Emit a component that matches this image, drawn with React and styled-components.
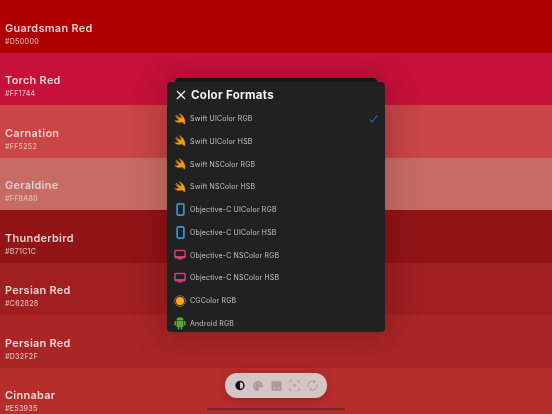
import React from 'react';
import styled, { createGlobalStyle } from 'styled-components';
import { FaPalette } from 'react-icons/fa';

const GlobalStyle = createGlobalStyle`
  html, body {
    margin: 0;
    padding: 0;
    background: #b72e2c;
    font-family: Inter, "Open Sans", "Liberation Sans", sans-serif;
  }
`;

const Page = styled.div`
  position: relative;
  width: 552px;
  height: 414px;
  overflow: hidden;
  filter: blur(0.3px);
`;

const SwatchList = styled.div`
  display: grid;
  grid-auto-rows: 52.55px;
`;

const Swatch = styled.div`
  display: flex;
  flex-direction: column;
  justify-content: flex-end;
  padding: 0 0 6px 5px;
  background: ${(p) => p.$bg};
  color: ${(p) => p.$fg};
`;

const SwatchName = styled.div`
  font-size: 10.9px;
  font-weight: 600;
  letter-spacing: 0.3px;
  line-height: 14px;
  margin-bottom: 2px;
`;

const SwatchHex = styled.div`
  font-size: 7px;
  font-weight: 500;
  letter-spacing: 0.3px;
  line-height: 10px;
  opacity: 0.85;
`;

const SheetBack = styled.div`
  position: absolute;
  left: 175px;
  top: 78px;
  width: 202px;
  height: 20px;
  border-radius: 4px;
  background: #1a1a1b;
`;

const Sheet = styled.div`
  position: absolute;
  left: 167px;
  top: 82px;
  width: 218px;
  height: 250px;
  border-radius: 4px;
  background: #212122;
  overflow: hidden;
  box-shadow: 0 0 32px 8px rgba(0, 0, 0, 0.16);
`;

const SheetHeader = styled.div`
  display: flex;
  align-items: center;
  gap: 5px;
  box-sizing: border-box;
  height: 25.2px;
  padding: 0.8px 0 0 9px;
  color: #f4f4f4;
`;

const SheetTitle = styled.div`
  font-size: 11.5px;
  font-weight: 700;
  letter-spacing: 0.3px;
`;

const FormatList = styled.div`
  display: grid;
  grid-auto-rows: 22.75px;
`;

const FormatRow = styled.div`
  display: flex;
  align-items: center;
  padding: 0 7px;
`;

const IconSlot = styled.div`
  display: flex;
  align-items: center;
  justify-content: center;
  flex: none;
  width: 12px;
  height: 14px;
  margin-right: 4px;
  color: ${(p) => p.$color};
`;

const FormatLabel = styled.div`
  flex: 1;
  font-size: 6.95px;
  font-weight: 400;
  letter-spacing: 0.2px;
  color: #c4c4c4;
`;

const Toolbar = styled.div`
  position: absolute;
  left: 225px;
  top: 373px;
  width: 102px;
  height: 25px;
  border-radius: 12px;
  background: #d5c5c4;
  display: flex;
  align-items: center;
  justify-content: space-between;
  padding: 0 9px;
  box-sizing: border-box;
  box-shadow: 0 2px 10px rgba(90, 10, 10, 0.3);
`;

const ToolIcon = styled.div`
  display: flex;
  align-items: center;
  justify-content: center;
  width: 12px;
  height: 12px;
  color: ${(p) => (p.$active ? '#111' : '#a89b9a')};
`;

const HomeBar = styled.div`
  position: absolute;
  left: 207px;
  top: 408px;
  width: 138px;
  height: 2px;
  border-radius: 1px;
  background: #6e2a2a;
`;

const swatches = [
  { name: 'Guardsman Red', hex: '#D50000', bg: '#ae0000', fg: '#e8cccc' },
  { name: 'Torch Red', hex: '#FF1744', bg: '#c8103a', fg: '#edd0d6' },
  { name: 'Carnation', hex: '#FF5252', bg: '#c94546', fg: '#e6cdcd' },
  { name: 'Geraldine', hex: '#FF8A80', bg: '#c76c64', fg: '#e2cfcd' },
  { name: 'Thunderbird', hex: '#B71C1C', bg: '#921415', fg: '#e6d0d0' },
  { name: 'Persian Red', hex: '#C62828', bg: '#a01e20', fg: '#e8d2d2' },
  { name: 'Persian Red', hex: '#D32F2F', bg: '#aa2526', fg: '#ead4d4' },
  { name: 'Cinnabar', hex: '#E53935', bg: '#b72d2c', fg: '#ecd6d5' },
];

const SwiftIcon = () => (
  <svg width="12" height="12" viewBox="0 0 12 12">
    <path
      d="M0.6 7.4C2.8 9.4 5.4 10 7.2 8.9C8.6 9.1 9.8 10 10.7 11.2C11.3 9.2 11 6.6 9.7 4.6C8.7 2.8 6.8 1.2 5 0.6C6.6 2.2 7.7 4 7.2 5.6C5.6 4.6 3.6 3.1 2 1.8C3 3.2 4.3 4.5 5.4 5.6C4 4.8 2.5 3.8 1.3 2.9C2.4 4.8 4 6.3 5.6 7.3C4 7.9 2.3 7.9 0.6 7.4Z"
      fill="currentColor"
      stroke="currentColor"
      strokeWidth="0.35"
    />
  </svg>
);

const PhoneIcon = () => (
  <svg width="9" height="13" viewBox="0 0 9 13" fill="none">
    <rect x="1.1" y="0.9" width="6.8" height="11.2" rx="1.4" stroke="currentColor" strokeWidth="1.7" />
  </svg>
);

const MonitorIcon = () => (
  <svg width="13" height="12" viewBox="0 0 13 12" fill="none">
    <rect x="1" y="1.2" width="11" height="7.4" rx="1" stroke="currentColor" strokeWidth="1.6" />
    <path d="M1 7.2h11v2.2H1zM4.6 9h3.8l.8 2H3.8z" fill="currentColor" />
  </svg>
);

const CgIcon = () => (
  <svg width="12" height="12" viewBox="0 0 12 12">
    <circle cx="6" cy="6" r="4" fill="currentColor" />
    <circle cx="6" cy="6" r="5.3" fill="none" stroke="currentColor" strokeWidth="0.9" strokeDasharray="1.4 0.7" />
  </svg>
);

const AndroidIcon = () => (
  <svg width="12" height="14" viewBox="0 0 12 14" fill="currentColor">
    <path d="M2.5 4.6a3.5 3.3 0 0 1 7 0z" />
    <rect x="2.5" y="5.1" width="7" height="5.9" rx="0.7" />
    <rect x="0.4" y="5" width="1.6" height="4.6" rx="0.8" />
    <rect x="10" y="5" width="1.6" height="4.6" rx="0.8" />
    <rect x="3.7" y="10" width="1.6" height="3.6" rx="0.8" />
    <rect x="6.7" y="10" width="1.6" height="3.6" rx="0.8" />
  </svg>
);

const formats = [
  { label: 'Swift UIColor RGB', Icon: SwiftIcon, color: '#f59a10', checked: true },
  { label: 'Swift UIColor HSB', Icon: SwiftIcon, color: '#f59a10' },
  { label: 'Swift NSColor RGB', Icon: SwiftIcon, color: '#f59a10' },
  { label: 'Swift NSColor HSB', Icon: SwiftIcon, color: '#f59a10' },
  { label: 'Objective-C UIColor RGB', Icon: PhoneIcon, color: '#3d93cf' },
  { label: 'Objective-C UIColor HSB', Icon: PhoneIcon, color: '#3d93cf' },
  { label: 'Objective-C NSColor RGB', Icon: MonitorIcon, color: '#d13f7f' },
  { label: 'Objective-C NSColor HSB', Icon: MonitorIcon, color: '#d13f7f' },
  { label: 'CGColor RGB', Icon: CgIcon, color: '#f7a823' },
  { label: 'Android RGB', Icon: AndroidIcon, color: '#5aa82f' },
];

const ContrastIcon = () => (
  <svg width="10" height="11" viewBox="0 0 10 11">
    <circle cx="5" cy="5.5" r="4" fill="none" stroke="currentColor" strokeWidth="1.4" />
    <path d="M5 1.5a4 4 0 0 0 0 8z" fill="currentColor" />
  </svg>
);

const PictureIcon = () => (
  <svg width="11" height="10" viewBox="0 0 11 10">
    <path d="M0.5 1a.8.8 0 0 1 .8-.8h8.4a.8.8 0 0 1 .8.8v8a.8.8 0 0 1-.8.8H1.3a.8.8 0 0 1-.8-.8z" fill="currentColor" />
    <path d="M2.5 6.5h2v1.2h-2zM6.5 6.5h2v1.2h-2z" fill="#d5c5c4" />
  </svg>
);

const ScanIcon = () => (
  <svg width="11" height="11" viewBox="0 0 11 11" fill="none" stroke="currentColor" strokeWidth="0.9">
    <path d="M0.6 3V1.4a.8.8 0 0 1 .8-.8H3M8 .6h1.6a.8.8 0 0 1 .8.8V3M10.4 8v1.6a.8.8 0 0 1-.8.8H8M3 10.4H1.4a.8.8 0 0 1-.8-.8V8" />
    <circle cx="5.5" cy="5.5" r="1.3" fill="currentColor" stroke="none" />
  </svg>
);

const CycleIcon = () => (
  <svg width="11" height="11" viewBox="0 0 11 11" fill="none" stroke="currentColor" strokeWidth="1">
    <path d="M1.2 6.6A4.4 4.4 0 0 1 7.8 1.7" />
    <path d="M9.8 4.4A4.4 4.4 0 0 1 3.2 9.3" />
    <path d="M7.2 0.2 8.2 2.2 6.2 3M3.8 10.8 2.8 8.8 4.8 8" />
  </svg>
);

const App = () => (
  <Page>
    <GlobalStyle />
    <SwatchList>
      {swatches.map((s) => (
        <Swatch key={s.hex} $bg={s.bg} $fg={s.fg}>
          <SwatchName>{s.name}</SwatchName>
          <SwatchHex>{s.hex}</SwatchHex>
        </Swatch>
      ))}
    </SwatchList>

    <SheetBack />
    <Sheet>
      <SheetHeader>
        <svg width="10" height="10" viewBox="0 0 10 10" stroke="currentColor" strokeWidth="1.2">
          <path d="M1 1l8 8M9 1l-8 8" />
        </svg>
        <SheetTitle>Color Formats</SheetTitle>
      </SheetHeader>
      <FormatList>
        {formats.map(({ label, Icon, color, checked }) => (
          <FormatRow key={label}>
            <IconSlot $color={color}>
              <Icon />
            </IconSlot>
            <FormatLabel>{label}</FormatLabel>
            {checked && (
              <svg width="9" height="8" viewBox="0 0 9 8" fill="none" stroke="#1f86d0" strokeWidth="1">
                <path d="M0.8 4.4 3 7 8.2 0.6" />
              </svg>
            )}
          </FormatRow>
        ))}
      </FormatList>
    </Sheet>

    <Toolbar>
      <ToolIcon $active><ContrastIcon /></ToolIcon>
      <ToolIcon><FaPalette size={10} /></ToolIcon>
      <ToolIcon><PictureIcon /></ToolIcon>
      <ToolIcon><ScanIcon /></ToolIcon>
      <ToolIcon><CycleIcon /></ToolIcon>
    </Toolbar>
    <HomeBar />
  </Page>
);

export default App;
